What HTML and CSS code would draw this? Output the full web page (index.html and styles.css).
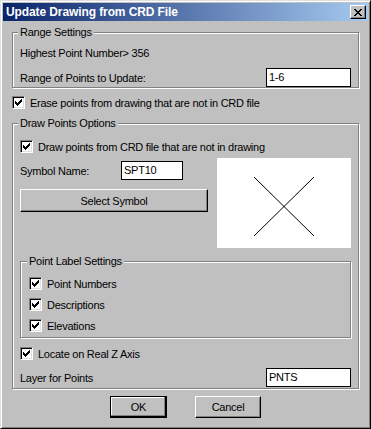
FILE: index.html
```html
<!DOCTYPE html>
<html lang="en">
<head>
  <meta charset="UTF-8" />
  <title>Update Drawing from CRD File</title>
  <link rel="stylesheet" href="styles.css">
</head>
<body>

  <div class="dialog">
    <!-- Title bar -->
    <div class="titlebar">
      <span class="title">Update Drawing from CRD File</span>
      <span class="close-btn">
        <svg width="8" height="7" viewBox="0 0 8 7" shape-rendering="crispEdges">
          <path d="M0 0h2v1h-2zM6 0h2v1h-2zM1 1h2v1h-2zM5 1h2v1h-2zM2 2h4v1h-4zM3 3h2v1h-2zM2 4h4v1h-4zM1 5h2v1h-2zM5 5h2v1h-2zM0 6h2v1h-2zM6 6h2v1h-2z" fill="#000"/>
        </svg>
      </span>
    </div>

    <div class="body">
      <fieldset class="group range-group">
        <legend>Range Settings</legend>
        <div class="row highest">Highest Point Number&gt; 356</div>
        <div class="row field-row range-row">
          <span>Range of Points to Update:</span>
          <span class="textbox">1-6</span>
        </div>
      </fieldset>

      <div class="check-row erase-check">
        <span class="check"><svg width="9" height="9" viewBox="0 0 9 9" shape-rendering="crispEdges"><path d="M1 3h1v3h-1zM2 4h1v3h-1zM3 5h1v3h-1zM4 4h1v3h-1zM5 3h1v3h-1zM6 2h1v3h-1zM7 1h1v3h-1z" fill="#000"/></svg></span>
        <span>Erase points from drawing that are not in CRD file</span>
      </div>

      <fieldset class="group draw-group">
        <legend>Draw Points Options</legend>
        <div class="check-row draw-check">
          <span class="check"><svg width="9" height="9" viewBox="0 0 9 9" shape-rendering="crispEdges"><path d="M1 3h1v3h-1zM2 4h1v3h-1zM3 5h1v3h-1zM4 4h1v3h-1zM5 3h1v3h-1zM6 2h1v3h-1zM7 1h1v3h-1z" fill="#000"/></svg></span>
          <span>Draw points from CRD file that are not in drawing</span>
        </div>

        <div class="symbol-area">
          <div class="symbol-left">
            <div class="row symbol-row">
              <span class="symbol-label">Symbol Name:</span>
              <span class="textbox symbol-box">SPT10</span>
            </div>
            <div class="btn select-btn">Select Symbol</div>
          </div>
          <div class="preview">
            <svg width="134" height="90" viewBox="0 0 134 90">
              <path d="M37 19L97 78M97 19L37 78" stroke="#000" stroke-width="1" fill="none"/>
            </svg>
          </div>
        </div>

        <fieldset class="group label-group">
          <legend>Point Label Settings</legend>
          <div class="check-row label-check">
            <span class="check"><svg width="9" height="9" viewBox="0 0 9 9" shape-rendering="crispEdges"><path d="M1 3h1v3h-1zM2 4h1v3h-1zM3 5h1v3h-1zM4 4h1v3h-1zM5 3h1v3h-1zM6 2h1v3h-1zM7 1h1v3h-1z" fill="#000"/></svg></span>
            <span>Point Numbers</span>
          </div>
          <div class="check-row label-check">
            <span class="check"><svg width="9" height="9" viewBox="0 0 9 9" shape-rendering="crispEdges"><path d="M1 3h1v3h-1zM2 4h1v3h-1zM3 5h1v3h-1zM4 4h1v3h-1zM5 3h1v3h-1zM6 2h1v3h-1zM7 1h1v3h-1z" fill="#000"/></svg></span>
            <span>Descriptions</span>
          </div>
          <div class="check-row label-check">
            <span class="check"><svg width="9" height="9" viewBox="0 0 9 9" shape-rendering="crispEdges"><path d="M1 3h1v3h-1zM2 4h1v3h-1zM3 5h1v3h-1zM4 4h1v3h-1zM5 3h1v3h-1zM6 2h1v3h-1zM7 1h1v3h-1z" fill="#000"/></svg></span>
            <span>Elevations</span>
          </div>
        </fieldset>

        <div class="check-row locate-check">
          <span class="check"><svg width="9" height="9" viewBox="0 0 9 9" shape-rendering="crispEdges"><path d="M1 3h1v3h-1zM2 4h1v3h-1zM3 5h1v3h-1zM4 4h1v3h-1zM5 3h1v3h-1zM6 2h1v3h-1zM7 1h1v3h-1z" fill="#000"/></svg></span>
          <span>Locate on Real Z Axis</span>
        </div>

        <div class="row field-row layer-row">
          <span>Layer for Points</span>
          <span class="textbox">PNTS</span>
        </div>
      </fieldset>

      <div class="buttons">
        <div class="btn btn-default ok-btn">OK</div>
        <div class="btn cancel-btn">Cancel</div>
      </div>
    </div>
  </div>

</body>
</html>
```

FILE: styles.css
```css
* { margin: 0; padding: 0; box-sizing: border-box; }
body {
  background: #c0c0c0;
  font-family: "Liberation Sans", Arial, sans-serif;
  font-size: 11px;
  letter-spacing: -0.25px;
  color: #000;
}
.dialog {
  width: 371px;
  height: 429px;
  background: #c0c0c0;
  border: 1px solid;
  border-color: #dfdfdf #000 #000 #dfdfdf;
  box-shadow: inset 1px 1px #fff, inset -1px -1px #808080;
  padding: 2px;
  display: flex;
  flex-direction: column;
}

/* title bar */
.titlebar {
  height: 18px;
  display: flex;
  align-items: center;
  padding: 0 2px 0 3px;
  background: linear-gradient(to right, #0a246a, #a6caf0);
  color: #fff;
  font-weight: bold;
  font-size: 12px;
  letter-spacing: -0.1px;
}
.title { flex: 1; }
.close-btn {
  width: 16px;
  height: 14px;
  background: #c0c0c0;
  border: 1px solid;
  border-color: #fff #000 #000 #fff;
  box-shadow: inset -1px -1px #808080;
  display: flex;
  align-items: center;
  justify-content: center;
}

.body { padding: 5px 9px 0; }

/* group boxes */
.group {
  margin: 0;
  padding: 0 7px;
  min-width: 0;
  border: 1px solid #808080;
  box-shadow: inset 1px 1px #fff, 1px 1px #fff;
}
.group legend {
  margin-left: -2px;
  padding: 0 2px;
  line-height: 13px;
  background: #c0c0c0;
}

.row {
  display: flex;
  align-items: center;
  justify-content: space-between;
}
.highest { height: 18px; margin-top: 5px; }
.range-row { height: 19px; margin-top: 6px; }

.textbox {
  width: 85px;
  height: 19px;
  background: #fff;
  border: 1px solid #000;
  padding: 0 2px;
  line-height: 17px;
}

/* checkboxes */
.check-row {
  display: flex;
  align-items: center;
  gap: 5px;
  height: 13px;
}
.check {
  width: 13px;
  height: 13px;
  background: #fff;
  border: 1px solid;
  border-color: #808080 #fff #fff #808080;
  box-shadow: inset 1px 1px #000, inset -1px -1px #dfdfdf;
}
.check svg { display: block; margin: 1px; }

.erase-check { margin-top: 8px; }
.draw-group { margin-top: 8px; padding-bottom: 1px; }
.draw-check { margin-top: 10px; }

.symbol-area {
  display: flex;
  justify-content: space-between;
  align-items: flex-start;
  margin-top: 5px;
}
.symbol-left { width: 188px; }
.symbol-row {
  height: 19px;
  margin-top: 3px;
  justify-content: flex-start;
}
.symbol-label { width: 101px; }
.symbol-box { width: 62px; }

.preview {
  width: 134px;
  height: 90px;
  background: #fff;
}
.preview svg { display: block; }

/* buttons */
.btn {
  display: flex;
  align-items: center;
  justify-content: center;
  background: #c0c0c0;
  border: 1px solid;
  border-color: #fff #000 #000 #fff;
  box-shadow: inset -1px -1px #808080;
}
.select-btn { height: 23px; margin-top: 9px; }

.label-group { margin-top: 7px; padding: 0 8px 5px; }
.label-check { margin-top: 8px; }
.label-check:first-of-type { margin-top: 9px; }

.locate-check { margin-top: 9px; }
.layer-row { height: 19px; margin-top: 8px; }

.buttons {
  display: flex;
  justify-content: center;
  gap: 28px;
  margin-top: 7px;
}
.buttons .btn { height: 22px; }
.ok-btn { width: 57px; }
.cancel-btn { width: 66px; }
.btn-default {
  border-color: #000;
  box-shadow: inset -1px -1px #000, inset -2px -2px #808080, inset 1px 1px #fff;
}
```
